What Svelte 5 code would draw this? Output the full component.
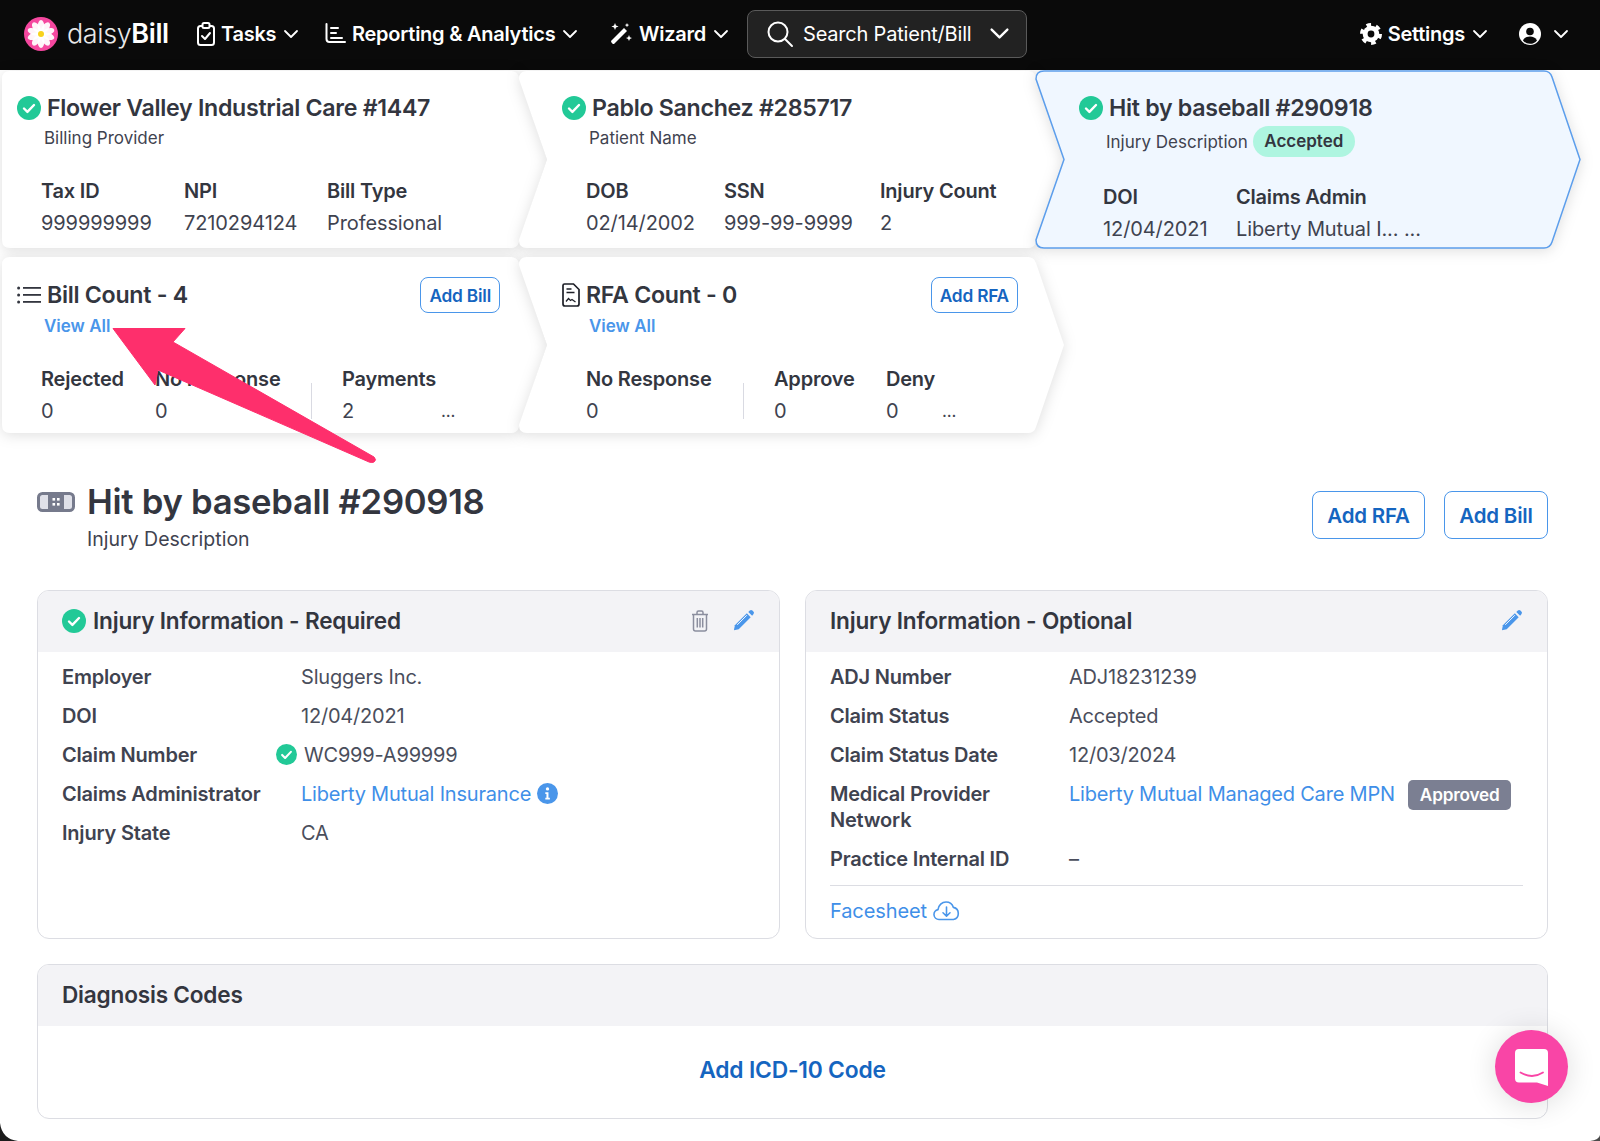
<script>
  const petals = [0, 36, 72, 108, 144, 180, 216, 252, 288, 324]

  const topCards = [
    {
      title: 'Flower Valley Industrial Care #1447',
      sub: 'Billing Provider',
      kind: 'first',
      fields: [
        { label: 'Tax ID', value: '999999999', w: 143 },
        { label: 'NPI', value: '7210294124', w: 143 },
        { label: 'Bill Type', value: 'Professional', w: 130 }
      ]
    },
    {
      title: 'Pablo Sanchez #285717',
      sub: 'Patient Name',
      kind: 'mid',
      fields: [
        { label: 'DOB', value: '02/14/2002', w: 138 },
        { label: 'SSN', value: '999-99-9999', w: 156 },
        { label: 'Injury Count', value: '2', w: 130 }
      ]
    }
  ]

  const required = [
    { label: 'Employer', value: 'Sluggers Inc.' },
    { label: 'DOI', value: '12/04/2021' },
    { label: 'Claim Number', value: 'WC999-A99999', verified: true },
    { label: 'Claims Administrator', value: 'Liberty Mutual Insurance', link: true, info: true },
    { label: 'Injury State', value: 'CA' }
  ]

  const optional = [
    { label: 'ADJ Number', value: 'ADJ18231239' },
    { label: 'Claim Status', value: 'Accepted' },
    { label: 'Claim Status Date', value: '12/03/2024' },
    { label: 'Medical Provider Network', value: 'Liberty Mutual Managed Care MPN', link: true, badge: 'Approved' },
    { label: 'Practice Internal ID', value: '–' }
  ]

  // chevron outline, w and h are the body of the card, the tip sticks out 28px
  function shape(w, h, notch) {
    return `M 8 0 H ${w - 8} Q ${w - 2} 0 ${w} 6 L ${w + 28} ${h / 2} L ${w} ${h - 6} Q ${w - 2} ${h} ${w - 8} ${h} H 8 Q 0 ${h} 0 ${h - 8} ${notch ? `L 28 ${h / 2} L 0 8` : 'V 8'} Q 0 0 8 0 Z`
  }
</script>

{#snippet check(size)}
  <svg class="check" width={size} height={size} viewBox="0 0 24 24">
    <circle cx="12" cy="12" r="12" fill="#22c997" />
    <path d="M7 12.5l3.4 3.4L17 9" fill="none" stroke="#fff" stroke-width="2.4" stroke-linecap="round" stroke-linejoin="round" />
  </svg>
{/snippet}

{#snippet chevron(size)}
  <svg class="chev" width={size} height={size} viewBox="0 0 16 16">
    <path d="M2 5l6 6 6-6" fill="none" stroke="currentColor" stroke-width="1.8" stroke-linecap="round" stroke-linejoin="round" />
  </svg>
{/snippet}

{#snippet pencil()}
  <svg width="23" height="23" viewBox="0 0 24 24">
    <path d="M3 17L15.5 4.5l4 4L7 21l-5 1.2z" fill="#4a96ea" />
    <path d="M17 3l1.6-1.4a2 2 0 0 1 2.7 0l1 1a2 2 0 0 1 0 2.8L21 7z" fill="#4a96ea" />
    <path d="M5.5 16.5L15.5 6.5" stroke="#fff" stroke-width="1" />
  </svg>
{/snippet}

{#snippet shapeBg(kind, active, w, h)}
  <svg class="shape" class:active width={w + 30} height={h} viewBox="0 0 {w + 30} {h}">
    <path d={shape(w, h, kind !== 'first')} />
  </svg>
{/snippet}

{#snippet rows(list)}
  <dl class="rows">
    {#each list as row}
      <dt>{row.label}</dt>
      <dd class:verified={row.verified}>
        {#if row.verified}{@render check(21)}{/if}
        {#if row.link}<a href="#top" class="link">{row.value}</a>{:else}<span>{row.value}</span>{/if}
        {#if row.info}
          <svg width="21" height="21" viewBox="0 0 24 24">
            <circle cx="12" cy="12" r="12" fill="#4a96ea" />
            <circle cx="12" cy="6.8" r="1.9" fill="#fff" />
            <path d="M9.5 10.5h3.6v6.3h1.6v2H9.5v-2h1.3v-4.3H9.5z" fill="#fff" />
          </svg>
        {/if}
        {#if row.badge}<span class="approved">{row.badge}</span>{/if}
      </dd>
    {/each}
  </dl>
{/snippet}

<div class="page" id="top">
  <nav class="topbar">
    <div class="logo">
      <svg width="34" height="34" viewBox="0 0 34 34">
        <circle cx="17" cy="17" r="17" fill="#f5479f" />
        {#each petals as deg}
          <ellipse cx="17" cy="9.5" rx="3.4" ry="6.4" fill="#fff" fill-opacity=".94" transform="rotate({deg} 17 17)" />
        {/each}
        <circle cx="17" cy="17" r="3" fill="#f8d21c" />
      </svg>
      <span class="wordmark">daisy<b>Bill</b></span>
    </div>

    <button class="nav-item tasks">
      <svg width="18" height="24" viewBox="0 0 18 24" fill="none" stroke="#fff" stroke-width="2">
        <rect x="1" y="4" width="16" height="19" rx="2.5" />
        <rect x="5.5" y="1" width="7" height="5" rx="1.5" fill="#0a0a0a" />
        <path d="M5 14l3 3 5-6" stroke-linecap="round" stroke-linejoin="round" />
      </svg>
      Tasks {@render chevron(16)}
    </button>
    <button class="nav-item reporting">
      <svg width="21" height="21" viewBox="0 0 21 21" fill="none" stroke="#fff" stroke-width="2">
        <path d="M1.5 1v15a3 3 0 0 0 3 3H20" stroke-linecap="round" />
        <path d="M6 5h7M6 10h5M6 15h11" stroke-linecap="round" />
      </svg>
      Reporting &amp; Analytics {@render chevron(16)}
    </button>
    <button class="nav-item wizard">
      <svg width="23" height="23" viewBox="0 0 23 23" fill="#fff">
        <path d="M1.5 18.5L14 6l3 3L4.5 21.5a1.5 1.5 0 0 1-2.1 0l-.9-.9a1.5 1.5 0 0 1 0-2.1z" />
        <path d="M5 1l1 2.6L8.600 4.600 6 5.600 5 8 4 5.600 1.400 4.600 4 3.600zM19 13l.9 2.200 2.100.8-2.100.9L19 19l-.9-2.100-2.100-.9 2.100-.8zM17 1l.7 1.500 1.500.6-1.500.7L17 5.300l-.7-1.500-1.500-.7 1.500-.6z" />
      </svg>
      Wizard {@render chevron(16)}
    </button>
    <button class="search">
      <svg width="28" height="28" viewBox="0 0 28 28" fill="none" stroke="#fff" stroke-width="2">
        <circle cx="12" cy="12" r="9.500" />
        <path d="M19 19l7 7" stroke-linecap="round" />
      </svg>
      <span>Search Patient/Bill</span>
      {@render chevron(21)}
    </button>
    <div class="spacer"></div>
    <button class="nav-item settings">
      <svg width="22" height="22" viewBox="0 0 22 22">
        <circle cx="11" cy="11" r="8.300" fill="#fff" />
        <circle cx="11" cy="11" r="9" fill="none" stroke="#fff" stroke-width="4" stroke-dasharray="4.500 4.925" />
        <circle cx="11" cy="11" r="3.400" fill="#0a0a0a" />
      </svg>
      Settings {@render chevron(16)}
    </button>
    <button class="nav-item user">
      <svg width="22" height="22" viewBox="0 0 22 22">
        <circle cx="11" cy="11" r="11" fill="#fff" />
        <circle cx="11" cy="8.500" r="3.800" fill="#0a0a0a" />
        <path d="M4 17.500c1.500-3 4-4 7-4s5.500 1 7 4a9 9 0 0 1-14 0z" fill="#0a0a0a" />
      </svg>
      {@render chevron(16)}
    </button>
  </nav>

  <section class="cards">
    {#each topCards as card}
      <article class="card {card.kind}">
        {@render shapeBg(card.kind, false, 517, 177)}
        <h3>{@render check(24)}{card.title}</h3>
        <p class="sub">{card.sub}</p>
        <div class="fields">
          {#each card.fields as f}
            <div style="width:{f.w}px"><b>{f.label}</b><span>{f.value}</span></div>
          {/each}
        </div>
      </article>
    {/each}

    <article class="card mid">
      {@render shapeBg('mid', true, 516, 177)}
      <h3>{@render check(24)}Hit by baseball #290918</h3>
      <p class="sub with-badge">Injury Description <span class="accepted">Accepted</span></p>
      <div class="fields tight">
        <div style="width:133px"><b>DOI</b><span>12/04/2021</span></div>
        <div style="width:220px"><b>Claims Admin</b><span>Liberty Mutual I... ...</span></div>
      </div>
    </article>

    <article class="card first second-row">
      {@render shapeBg('first', false, 517, 176)}
      <header>
        <h3>
          <svg class="list-icon" width="24" height="20" viewBox="0 0 24 20" fill="#33363f">
            <circle cx="1.600" cy="3" r="1.500" /><circle cx="1.600" cy="10" r="1.500" /><circle cx="1.600" cy="17" r="1.500" />
            <rect x="6" y="2" width="18" height="1.800" /><rect x="6" y="9" width="18" height="1.800" /><rect x="6" y="16" width="18" height="1.800" />
          </svg>
          Bill Count - 4
        </h3>
        <button class="outline small">Add Bill</button>
      </header>
      <a href="#top" class="view-all">View All</a>
      <div class="fields">
        <div style="width:114px"><b>Rejected</b><span>0</span></div>
        <div style="width:156px"><b>No Response</b><span>0</span></div>
        <i class="divider"></i>
        <div style="width:99px"><b>Payments</b><span>2</span></div>
        <span class="more">...</span>
      </div>
    </article>

    <article class="card mid second-row">
      {@render shapeBg('mid', false, 517, 176)}
      <header>
        <h3>
          <svg class="file-icon" width="18" height="24" viewBox="0 0 18 24" fill="none" stroke="#1d1f27" stroke-width="1.700">
            <path d="M2.500 1h9L17 6.500V21a2 2 0 0 1-2 2H3a2 2 0 0 1-2-2V2.500A1.500 1.500 0 0 1 2.500 1z" />
            <path d="M4.500 6h5M4.500 9.500h8M4 18.500l2.500-3 2 2 1.500-1 3.500 2.500" stroke-width="1.300" />
          </svg>
          RFA Count - 0
        </h3>
        <button class="outline small">Add RFA</button>
      </header>
      <a href="#top" class="view-all">View All</a>
      <div class="fields">
        <div style="width:157px"><b>No Response</b><span>0</span></div>
        <i class="divider"></i>
        <div style="width:112px"><b>Approve</b><span>0</span></div>
        <div style="width:56px"><b>Deny</b><span>0</span></div>
        <span class="more">...</span>
      </div>
    </article>
  </section>

  <main class="content">
    <div class="title-row">
      <svg class="band" width="38" height="20" viewBox="0 0 38 20">
        <rect x="1.500" y="1.500" width="35" height="17" rx="4" fill="#dfe0e8" stroke="#767a8c" stroke-width="3" />
        <rect x="11" y="3" width="16" height="14" fill="#767a8c" />
        <g fill="#fff"><rect x="15.500" y="6" width="2.600" height="2.600" /><rect x="20" y="6" width="2.600" height="2.600" /><rect x="15.500" y="11" width="2.600" height="2.600" /><rect x="20" y="11" width="2.600" height="2.600" /></g>
      </svg>
      <div class="title-text">
        <h1>Hit by baseball #290918</h1>
        <p>Injury Description</p>
      </div>
      <div class="actions">
        <button class="outline">Add RFA</button>
        <button class="outline">Add Bill</button>
      </div>
    </div>

    <div class="panels">
      <section class="panel">
        <div class="panel-head">
          {@render check(24)}
          <h2>Injury Information - Required</h2>
          <svg class="trash" width="18" height="22" viewBox="0 0 18 22" fill="none" stroke="#8b8e9e" stroke-width="1.500">
            <path d="M1 4.500h16M6 4V2.500A1.500 1.500 0 0 1 7.500 1h3A1.500 1.500 0 0 1 12 2.500V4M2.500 4.500V19a2 2 0 0 0 2 2h9a2 2 0 0 0 2-2V4.500M6.300 8v9.500M9 8v9.500M11.700 8v9.500" />
          </svg>
          {@render pencil()}
        </div>
        <div class="panel-body">
          {@render rows(required)}
        </div>
      </section>

      <section class="panel">
        <div class="panel-head">
          <h2>Injury Information - Optional</h2>
          {@render pencil()}
        </div>
        <div class="panel-body">
          {@render rows(optional)}
          <hr />
          <a href="#top" class="link facesheet">
            Facesheet
            <svg width="27" height="20" viewBox="0 0 27 20" fill="none" stroke="#4a96ea" stroke-width="1.600">
              <path d="M7 18.500H6a5 5 0 0 1-1-9.900C5.500 4.300 9 1 13 1c3.500 0 6.400 2.200 7.400 5.400A6.200 6.200 0 0 1 20.500 18.500H7z" stroke-linejoin="round" />
              <path d="M13.500 6v9M10 11.800l3.500 3.400 3.500-3.400" stroke-linecap="round" stroke-linejoin="round" />
            </svg>
          </a>
        </div>
      </section>
    </div>

    <section class="panel diagnosis">
      <div class="panel-head"><h2>Diagnosis Codes</h2></div>
      <div class="add-code"><a href="#top">Add ICD-10 Code</a></div>
    </section>
  </main>

  <svg class="arrow" width="280" height="145" viewBox="0 0 280 145">
    <path d="M1 1.500H73L61 15 262 130Q265 133 262 135 260 136 257 135L46 43 43 58Z" fill="#fe2f6c" stroke="#fe2f6c" stroke-width="1" stroke-linejoin="round" />
  </svg>

  <svg class="corner left" width="18" height="18" viewBox="0 0 18 18"><path d="M0 0Q2 16 18 18H0Z" fill="#1c1c1c" /></svg>
  <svg class="corner right" width="10" height="6" viewBox="0 0 10 6"><path d="M10 0Q9 5 0 6H10Z" fill="#4a4a4a" /></svg>

  <button class="chat" aria-label="Chat">
    <svg width="34" height="38" viewBox="0 0 34 38">
      <path d="M4 0H29a4 4 0 0 1 4 4V37L22 33.500H4a4 4 0 0 1-4-4V4a4 4 0 0 1 4-4z" fill="#fff" />
      <path d="M5.500 23.500C13 28 21 28 28 23.500" fill="none" stroke="#f945a6" stroke-width="1.800" stroke-linecap="round" />
    </svg>
  </button>
</div>

<style>
  :global(body) {
    margin: 0;
    background: #fff;
    font-family: Inter, "Open Sans", "Liberation Sans", sans-serif;
    color: #33363f;
  }

  .page {
    position: relative;
    height: 1141px;
    overflow: hidden;
  }

  button {
    font-family: inherit;
    background: none;
    border: 0;
    padding: 0;
    cursor: pointer;
  }

  /* top bar */
  .topbar {
    height: 70px;
    box-sizing: border-box;
    padding: 0 0 3px 24px;
    background: #0a0a0a;
    display: flex;
    align-items: center;
    color: #fff;
  }
  .logo {
    display: flex;
    align-items: center;
    gap: 9px;
    width: 173px;
  }
  .wordmark {
    font-size: 27px;
    font-weight: 300;
    color: #e9e9e9;
    letter-spacing: -0.4px;
  }
  .wordmark b {
    font-weight: 600;
    color: #fff;
  }
  .nav-item {
    display: flex;
    align-items: center;
    color: #fff;
    font-size: 20px;
    font-weight: 600;
    gap: 6px;
    letter-spacing: -0.25px;
  }
  .chev {
    margin-left: 1px;
  }
  .tasks {
    width: 128px;
  }
  .reporting {
    width: 285px;
  }
  .wizard {
    width: 137px;
  }
  .search {
    width: 280px;
    height: 48px;
    box-sizing: border-box;
    background: #222;
    border: 1.500px solid #5a5a5a;
    border-radius: 8px;
    display: flex;
    align-items: center;
    padding: 0 16px 0 18px;
    color: #fff;
    font-size: 20px;
    letter-spacing: -0.2px;
  }
  .search span {
    flex: 1;
    text-align: left;
    margin-left: 9px;
  }
  .spacer {
    flex: 1;
  }
  .settings {
    margin-right: 31px;
  }
  .user {
    margin-right: 31px;
    gap: 11px;
  }

  /* chevron cards */
  .cards {
    position: relative;
    z-index: 0;
    display: grid;
    grid-template-columns: 517px 517px 516px;
    grid-template-rows: 177px 176px;
    row-gap: 9px;
    padding: 1px 0 0 2px;
  }
  .card {
    position: relative;
    box-sizing: border-box;
    padding: 22px 0 0 15px;
  }
  .card.mid {
    padding-left: 43px;
  }
  .shape {
    position: absolute;
    left: 0;
    top: 0;
    z-index: -1;
    overflow: visible;
    fill: #fff;
    filter: drop-shadow(0 2px 7px rgba(0, 0, 0, 0.13));
  }
  .shape.active {
    fill: #f0f7ff;
    stroke: #5c9eec;
    stroke-width: 1.500;
  }
  h3 {
    margin: 0;
    display: flex;
    align-items: center;
    gap: 6px;
    font-size: 23.200px;
    line-height: 30px;
    font-weight: 600;
    color: #33363f;
    letter-spacing: -0.3px;
    white-space: nowrap;
  }
  .sub {
    margin: 4px 0 0 27px;
    font-size: 17px;
    line-height: 22px;
    color: #3f4350;
  }
  .sub.with-badge {
    margin-top: 3px;
    height: 31px;
    display: flex;
    align-items: center;
    gap: 5px;
    white-space: nowrap;
  }
  .accepted {
    background: #aef5e0;
    border-radius: 16px;
    height: 31px;
    line-height: 31px;
    padding: 0 11.500px;
    font-weight: 600;
    color: #33363f;
  }
  .fields {
    display: flex;
    margin: 29px 0 0 25px;
    position: relative;
    white-space: nowrap;
  }
  .first .fields {
    margin-left: 24px;
  }
  .mid .fields {
    margin-left: 24px;
  }
  .fields.tight {
    margin-top: 27px;
  }
  .fields b,
  .fields span {
    display: block;
    font-size: 20px;
    line-height: 26px;
    letter-spacing: -0.1px;
  }
  .fields b {
    font-weight: 600;
    color: #33363f;
    margin-bottom: 6px;
    letter-spacing: -0.2px;
  }
  .fields span {
    color: #3f4350;
  }
  .second-row {
    padding-top: 23px;
  }
  .second-row header {
    display: flex;
    justify-content: space-between;
    align-items: flex-start;
    width: 483px;
  }
  .second-row.mid header {
    width: 456px;
  }
  .second-row.mid {
    padding-left: 43px;
  }
  .second-row .fields {
    margin-top: 29px;
  }
  .list-icon {
    margin-right: 0;
  }
  .view-all {
    display: block;
    margin: 2px 0 0 27px;
    font-size: 17px;
    font-weight: 600;
    line-height: 22px;
    color: #4a96ea;
    text-decoration: none;
  }
  .divider {
    display: block;
    width: 1px;
    height: 36px;
    background: #d9dae2;
    margin: 17px 30px 0 0;
  }
  .fields span.more {
    font-size: 17px;
    line-height: 26px;
    align-self: flex-end;
  }
  .outline {
    box-sizing: border-box;
    width: 113px;
    height: 48px;
    border: 1.500px solid #4a96ea;
    border-radius: 8px;
    background: #fff;
    color: #1565c0;
    font-size: 20.500px;
    font-weight: 600;
    letter-spacing: -0.2px;
  }
  .outline.small {
    width: auto;
    height: 36px;
    margin-top: -3px;
    padding: 0 8px;
    font-size: 17.300px;
    letter-spacing: -0.2px;
  }

  /* body */
  .content {
    padding: 45px 52px 0 37px;
  }
  .title-row {
    display: flex;
    align-items: flex-start;
  }
  .band {
    margin: 14px 12px 0 0;
  }
  .title-text {
    flex: 1;
  }
  h1 {
    margin: 1px 0 0;
    font-size: 34.700px;
    line-height: 44px;
    font-weight: 600;
    color: #33363f;
    letter-spacing: -0.3px;
  }
  .title-text p {
    margin: 3px 0 0;
    font-size: 19.500px;
    line-height: 26px;
    color: #3f4350;
  }
  .actions {
    display: flex;
    gap: 19px;
    margin-top: 13px;
  }
  .actions .outline:last-child {
    width: 104px;
  }
  .panels {
    display: grid;
    grid-template-columns: 743px 743px;
    gap: 25px;
    margin-top: 38px;
    height: 349px;
  }
  .panel {
    border: 1.500px solid #dcdde3;
    border-radius: 12px;
    overflow: hidden;
    box-sizing: border-box;
  }
  .panel-head {
    height: 61px;
    background: #f3f3f6;
    display: flex;
    align-items: center;
    padding: 0 24px 2px 24px;
    gap: 7px;
    box-sizing: border-box;
  }
  h2 {
    flex: 1;
    margin: 0;
    font-size: 22.600px;
    font-weight: 600;
    color: #33363f;
    letter-spacing: -0.2px;
  }
  .trash {
    margin-right: 16px;
  }
  .panel-body {
    padding: 12px 24px 0;
  }
  .rows {
    margin: 0;
    display: grid;
    grid-template-columns: 239px 1fr;
    row-gap: 13px;
    font-size: 20px;
    line-height: 26px;
  }
  dt {
    font-weight: 600;
    color: #3f4350;
    padding-right: 25px;
    letter-spacing: -0.2px;
  }
  dd {
    margin: 0;
    display: flex;
    align-items: flex-start;
    gap: 6px;
    color: #4a4e5c;
    letter-spacing: -0.2px;
    white-space: nowrap;
  }
  dd svg {
    margin-top: 2px;
  }
  dd.verified {
    margin-left: -25px;
  }
  dd.verified span {
    margin-left: 1px;
  }
  .link {
    color: #3f8fe8;
    text-decoration: none;
  }
  .approved {
    background: #7b7f92;
    color: #fff;
    font-weight: 600;
    font-size: 17.200px;
    line-height: 30px;
    padding: 0 12px;
    border-radius: 5px;
    margin: -1px 0 0 7px;
  }
  hr {
    border: 0;
    border-top: 1.500px solid #dcdde3;
    margin: 13px 0 12px;
  }
  .facesheet {
    display: flex;
    align-items: center;
    gap: 6px;
    font-size: 20px;
    line-height: 26px;
    letter-spacing: -0.1px;
  }
  .diagnosis {
    margin-top: 24.500px;
    height: 155px;
  }
  .add-code {
    text-align: center;
    padding-top: 30px;
  }
  .add-code a {
    color: #1565c0;
    font-size: 22.800px;
    font-weight: 600;
    text-decoration: none;
    letter-spacing: -0.2px;
  }

  /* overlays */
  .arrow {
    position: absolute;
    left: 112px;
    top: 327px;
    z-index: 3;
  }
  .corner {
    position: absolute;
    bottom: 0;
  }
  .corner.left {
    left: 0;
  }
  .corner.right {
    right: 0;
  }
  .chat {
    position: absolute;
    left: 1495px;
    top: 1030px;
    width: 73px;
    height: 73px;
    border-radius: 50%;
    background: #f945a6;
    box-shadow: 0 2px 30px rgba(0, 0, 0, 0.14);
    display: flex;
    align-items: center;
    justify-content: center;
    padding-top: 3px;
  }
</style>
